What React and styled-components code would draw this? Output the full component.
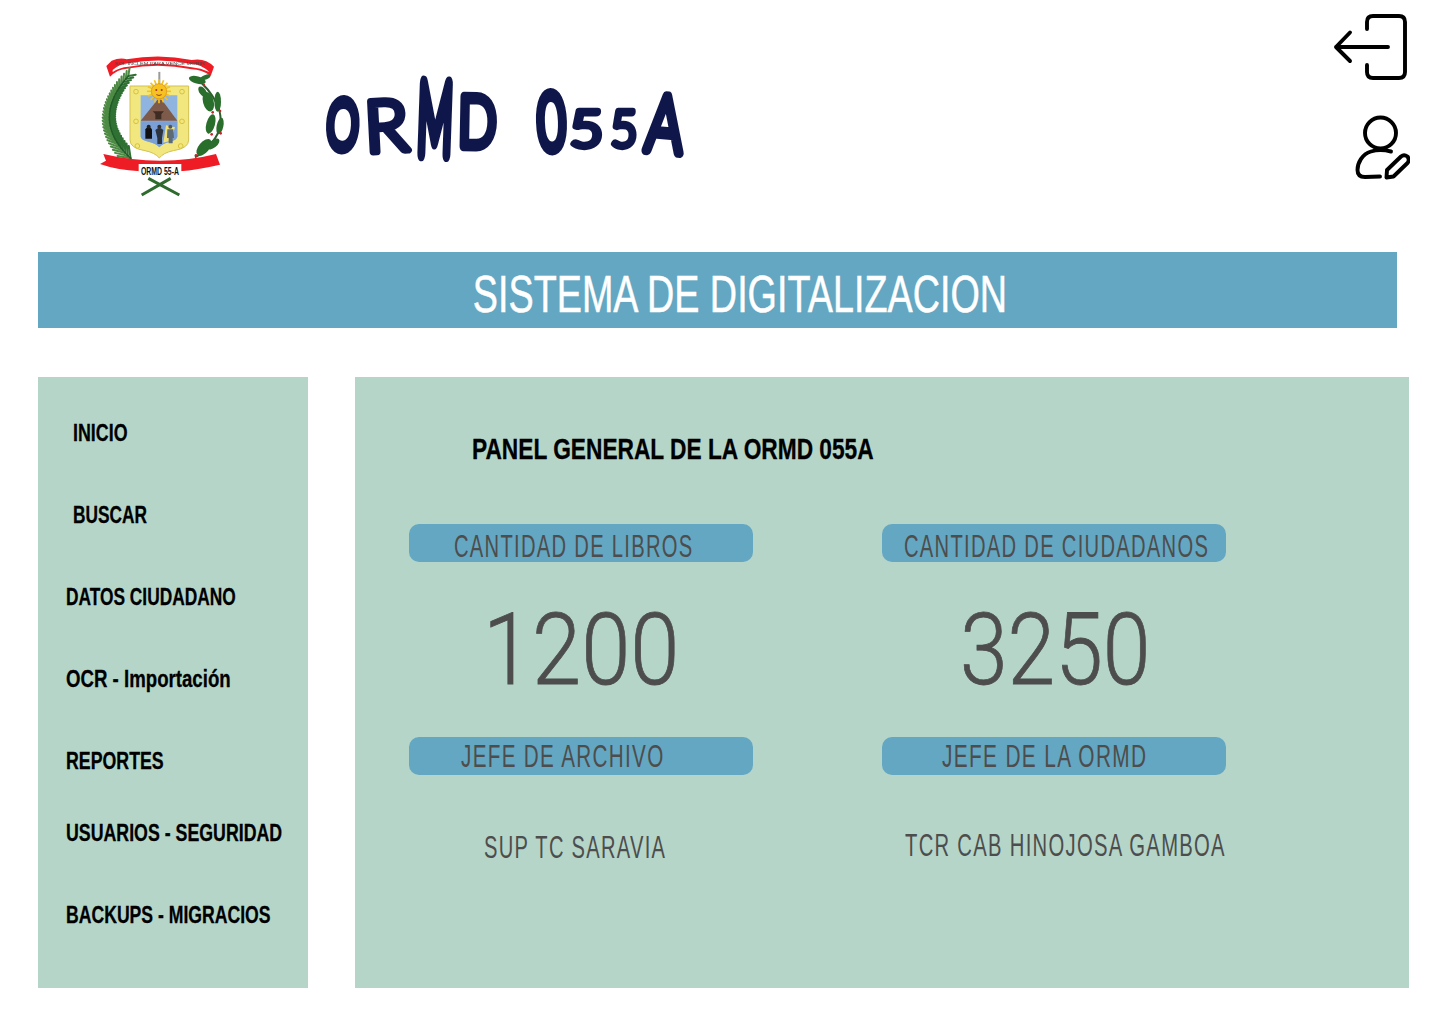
import React from "react";
import styled, { createGlobalStyle } from "styled-components";

const Global = createGlobalStyle`
  html, body { margin: 0; padding: 0; background: #fff; }
  #root { width: 1440px; height: 1024px; overflow: hidden; }
`;
const sans = `"Liberation Sans", Arial, sans-serif`;

const Page = styled.div`
  width: 1440px;
  height: 1024px;
  box-sizing: border-box;
  padding-left: 38px;
  display: flex;
  flex-direction: column;
`;
const Header = styled.header`
  height: 252px;
  display: flex;
  width: 1372px;
`;
const LogoBox = styled.div`
  margin: 40px 0 0 42px;
  width: 160px;
  height: 170px;
`;
const BrandSlot = styled.h1`
  margin: 70px 0 0 80px;
  flex: 1;
  height: 96px;
`;
const BrandMark = styled.svg`
  display: block;
  overflow: visible;
  font-family: "Lato", sans-serif;
  font-weight: 300;
  font-size: 80px;
`;
const Glyph = styled.text`
  fill: #0f174a;
  stroke: #0f174a;
  stroke-width: ${p => p.$stroke}px;
  stroke-linejoin: round;
  stroke-linecap: round;
  text-anchor: middle;
`;
const HeaderIcons = styled.div`
  display: flex;
  flex-direction: column;
  gap: 15px;
  width: 80px;
  margin-top: 10px;
`;
const Banner = styled.div`
  width: 1359px;
  height: 76px;
  background: #64a7c2;
  color: #fff;
  font: 400 52px/84px ${sans};
  -webkit-text-stroke: 0.5px #fff;
  text-align: center;
  padding-left: 45px;
  box-sizing: border-box;
`;
const Main = styled.main`
  margin-top: 49px;
  display: flex;
  gap: 47px;
  height: 611px;
`;
const Sidebar = styled.nav`
  width: 270px;
  background: #b5d5c9;
  padding-top: 15px;
  box-sizing: border-box;
`;
const NavItem = styled.div`
  height: ${p => p.$h || 82}px;
  padding-left: ${p => p.$indent}px;
  font: 700 24.5px/82px ${sans};
  -webkit-text-stroke: 0.3px #000;
  color: #000;
  white-space: nowrap;
`;
const Panel = styled.section`
  width: 1054px;
  background: #b5d5c9;
  box-sizing: border-box;
  padding: 52px 0 0 54px;
`;
const PanelTitle = styled.h2`
  margin: 0 0 55px 63px;
  font: 700 29px/40px ${sans};
  -webkit-text-stroke: 0.3px #000;
  color: #000;
`;
const Grid = styled.div`
  display: grid;
  grid-template-columns: 344px 344px;
  column-gap: 129px;
`;
const Pill = styled.div`
  height: 38px;
  border-radius: 10px;
  background: #64a7c2;
  color: #4d4d4d;
  font: 400 31px/${p => p.$lh}px ${sans};
  letter-spacing: 2px;
  padding-left: ${p => p.$indent}px;
  box-sizing: border-box;
  white-space: nowrap;
`;
const Value = styled.div`
  height: 175px;
  padding-left: ${p => p.$indent}px;
  font: 300 100px/176px "Roboto", sans-serif;
  -webkit-text-stroke: 0.8px #4d4d4d;
  color: #4d4d4d;
`;
const Person = styled.div`
  margin-top: ${p => p.$top}px;
  padding-left: ${p => p.$indent}px;
  font: 400 31px/40px ${sans};
  letter-spacing: 2px;
  color: #4d4d4d;
  white-space: nowrap;
`;
/* The reference face is a condensed sans: none is installed, so real text is narrowed. */
const Narrow = styled.span`
  display: inline-block;
  transform: scaleX(${p => p.$sx});
  transform-origin: ${p => (p.$center ? "center" : "left")} center;
  white-space: nowrap;
`;

const ExitIcon = () => (
  <svg width="80" height="75" viewBox="1330 10 80 75" fill="none" stroke="#000" strokeWidth="3.9" strokeLinecap="round" strokeLinejoin="round">
    <path d="M1367 29 V22 Q1367 16 1373 16 H1399 Q1405 16 1405 22 V72 Q1405 78 1399 78 H1373 Q1367 78 1367 72 V65" />
    <path d="M1388 47 H1336 M1350 32.5 L1336 47 L1350 61" />
  </svg>
);
const UserPenIcon = () => (
  <svg width="80" height="100" viewBox="1330 100 80 100" fill="none" stroke="#000" strokeWidth="3.9" strokeLinecap="round" strokeLinejoin="round">
    <circle cx="1380.5" cy="133" r="15.5" />
    <path d="M1391 151.5 C1385 150 1376 150 1371 151.5 C1362 154 1357.5 163 1357.5 170 C1357.5 175 1360 177 1365 177 L1380 176.5" />
    <path d="M1387 170 L1401 156.5 Q1404 154 1407.5 156.5 Q1410 160 1407.5 163 L1393.5 176.5 L1386.5 177.5 Z" />
  </svg>
);

const bez = (t, a, b, c) => [
  (1 - t) ** 2 * a[0] + 2 * t * (1 - t) * b[0] + t * t * c[0],
  (1 - t) ** 2 * a[1] + 2 * t * (1 - t) * b[1] + t * t * c[1],
];
const Frond = () => {
  const a = [152, 355], b = [28, 240], c = [145, 108];
  const out = [], inner = [];
  for (let i = 0; i < 30; i++) {
    const t = i / 29;
    const [x, y] = bez(t, a, b, c);
    const [nx, ny] = bez(t + 0.05, a, b, c);
    const len = Math.hypot(nx - x, ny - y) || 1;
    const ux = (nx - x) / len, uy = (ny - y) / len;
    const px = uy, py = -ux; // towards the outside of the curve
    const L = 30 - 12 * t;
    out.push(`M${x} ${y} L${x + ux * L + px * -L * 0.75} ${y + uy * L + py * -L * 0.75}`);
    inner.push(`M${x} ${y} L${x + ux * L * 1.1 - px * -L * 0.75} ${y + uy * L * 1.1 - py * -L * 0.75}`);
  }
  return (
    <g fill="none" strokeLinecap="round">
      <path d={inner.join(" ")} stroke="#4d8a43" strokeWidth="6" />
      <path d={out.join(" ")} stroke="#2f7033" strokeWidth="6" />
      <path d={`M${a} Q${b} ${c}`} stroke="#1f5a27" strokeWidth="4" />
    </g>
  );
};

const laurel = [
  [352, 120, 26, 11, 15], [376, 112, 16, 7, -20], [385, 185, 16, 30, -15], [413, 185, 10, 30, 0],
  [368, 155, 10, 18, -35], [392, 252, 13, 30, 15], [420, 258, 10, 25, 12], [372, 322, 16, 30, 40],
  [400, 312, 11, 22, 50],
];

const Crest = () => (
  <svg width="160" height="170" viewBox="0 0 480 510" style={{ filter: "blur(0.35px)" }}>
    <path d="M79 78 L95 62 Q120 52 140 58 Q240 40 335 60 Q375 52 402 80 L392 108 Q365 88 335 88 Q240 68 140 86 Q112 88 90 110 Z" fill="#ee1c25" />
    <path d="M98 90 Q118 72 145 70 Q240 52 335 72 Q362 72 388 96 Q362 84 335 82 Q240 62 145 80 Q118 82 98 96 Z" fill="#fff" />
    <text x="240" y="75" textAnchor="middle" fontFamily="Liberation Sans" fontSize="12" fill="#444" textLength="270" lengthAdjust="spacingAndGlyphs">SOL INCLEM PARA VENCE MORIR</text>
    <Frond />
    <path d="M345 112 C375 135 395 160 410 190 C425 220 428 260 405 295 C385 325 368 340 345 352" fill="none" stroke="#2c5f2c" strokeWidth="6" />
    <g fill="#2a6e2c">
      {laurel.map(([cx, cy, rx, ry, r], i) => (
        <ellipse key={i} cx={cx} cy={cy} rx={rx} ry={ry} transform={`rotate(${r} ${cx} ${cy})`} />
      ))}
    </g>
    <g fill="#c6242a">
      <circle cx="372" cy="135" r="3.5" /><circle cx="398" cy="217" r="4" /><circle cx="420" cy="213" r="4" />
      <circle cx="395" cy="283" r="4" /><circle cx="422" cy="280" r="4" /><circle cx="348" cy="346" r="4" />
    </g>
    <path d="M150 138 H326 V300 Q326 325 280 332 Q250 338 238 354 Q225 338 195 332 Q150 325 150 300 Z" fill="#f2e77e" stroke="#d2c24e" strokeWidth="3" />
    <path d="M182 166 H292 V290 Q290 300 270 305 Q248 310 238 322 Q228 310 205 305 Q184 300 182 290 Z" fill="#8fb4e0" />
    <path d="M182 242 L232 180 H246 L292 242 Z" fill="#7d5a4a" />
    <path d="M182 244 H292 V290 Q290 300 270 305 Q248 310 238 322 Q228 310 205 305 Q184 300 182 290 Z" fill="#7ba0d6" />
    <path d="M258 256 L285 262 L272 302 L250 308 Z" fill="#efe07a" />
    <path d="M218 214 H252 L244 222 V238 H226 V222 Z" fill="#3e2c22" />
    <rect x="235" y="95" width="6" height="85" fill="#9a9a9a" />
    <g stroke="#f6c21c" strokeWidth="5">
      {Array.from({ length: 16 }, (_, i) => {
        const a = (i * Math.PI) / 8;
        return <line key={i} x1={237 + 22 * Math.cos(a)} y1={154 + 22 * Math.sin(a)} x2={237 + 36 * Math.cos(a)} y2={154 + 36 * Math.sin(a)} />;
      })}
    </g>
    <circle cx="237" cy="154" r="23" fill="#f5c21f" stroke="#dd8a15" strokeWidth="2" />
    <circle cx="229" cy="150" r="3" fill="#a33" /><circle cx="245" cy="150" r="3" fill="#a33" />
    <path d="M229 164 Q237 169 245 164" stroke="#a33" strokeWidth="3" fill="none" />
    <path d="M196 268 q10 -14 20 0 v28 h-20 Z" fill="#111" />
    <circle cx="206" cy="260" r="6" fill="#222" />
    <path d="M226 270 q12 -12 24 0 l-4 24 v18 h-14 v-18 Z" fill="#2c3440" />
    <circle cx="238" cy="260" r="6" fill="#333" />
    <path d="M262 268 h18 l2 26 h-4 v16 h-12 v-16 h-5 Z" fill="#5d6b75" />
    <circle cx="271" cy="260" r="6" fill="#555" />
    <g fill="none" stroke="#d8c23c" strokeWidth="3">
      <circle cx="168" cy="155" r="7" /><circle cx="306" cy="155" r="7" /><circle cx="168" cy="244" r="7" />
      <circle cx="306" cy="244" r="7" /><circle cx="172" cy="318" r="7" /><circle cx="302" cy="318" r="7" />
    </g>
    <path d="M70 342 Q155 362 240 362 Q330 362 408 342 L420 374 Q350 390 300 394 H180 Q110 390 60 372 L78 362 Z" fill="#ee1c25" />
    <rect x="176" y="372" width="128" height="38" fill="#fff" />
    <text x="240" y="404" textAnchor="middle" fontFamily="Liberation Sans, sans-serif" fontWeight="700" fontSize="30" fill="#111" textLength="114" lengthAdjust="spacingAndGlyphs">ORMD 55-A</text>
    <path d="M185 465 L272 415 M298 465 L205 415" stroke="#2f6a2e" strokeWidth="9" />
  </svg>
);

const nav = [
  ["INICIO", 35, 0.728], ["BUSCAR", 35, 0.705], ["DATOS CIUDADANO", 28, 0.707], ["OCR - Importación", 28, 0.761],
  ["REPORTES", 28, 0.725, 72], ["USUARIOS - SEGURIDAD", 28, 0.725], ["BACKUPS - MIGRACIOS", 28, 0.719],
];
// character, x, baseline, horizontal and vertical scale, rotation and stroke of each hand-lettered glyph
const glyphs = [
  ["O", 341.5, 148.5, 0.5, 0.84, 3, 13],
  ["R", 387.5, 151, 0.9, 0.89, -3, 8],
  ["M", 434, 153.5, 0.48, 1.23, 2, 13],
  ["D", 477, 146.5, 0.63, 0.88, 1, 11],
  ["0", 552.5, 149.5, 0.6, 0.98, -2, 11],
  ["5", 586.5, 146.5, 0.72, 0.63, 0, 10],
  ["5", 624, 146.5, 0.58, 0.63, 0, 10],
  ["A", 662.5, 151.5, 0.7, 0.98, 5, 10],
];

export default function App() {
  return (
    <Page>
      <Global />
      <Header>
        <LogoBox><Crest /></LogoBox>
        <BrandSlot>
          <BrandMark width="370" height="96" viewBox="320 70 370 96" role="img" aria-label="ORMD 055A">
            {glyphs.map(([c, x, y, sx, sy, r, s], i) => (
              <Glyph key={i} $stroke={s} transform={`translate(${x} ${y}) rotate(${r}) scale(${sx} ${sy})`}>{c}</Glyph>
            ))}
          </BrandMark>
        </BrandSlot>
        <HeaderIcons><ExitIcon /><UserPenIcon /></HeaderIcons>
      </Header>
      <Banner><Narrow $sx={0.726} $center>SISTEMA DE DIGITALIZACION</Narrow></Banner>
      <Main>
        <Sidebar>
          {nav.map(([t, i, sx, h]) => <NavItem key={t} $indent={i} $h={h}><Narrow $sx={sx}>{t}</Narrow></NavItem>)}
        </Sidebar>
        <Panel>
          <PanelTitle><Narrow $sx={0.783}>PANEL GENERAL DE LA ORMD 055A</Narrow></PanelTitle>
          <Grid>
            <Pill $indent={45} $lh={46}><Narrow $sx={0.65}>CANTIDAD DE LIBROS</Narrow></Pill>
            <Pill $indent={22} $lh={46}><Narrow $sx={0.65}>CANTIDAD DE CIUDADANOS</Narrow></Pill>
            <Value $indent={74}><Narrow $sx={0.885}>1200</Narrow></Value>
            <Value $indent={78}><Narrow $sx={0.858}>3250</Narrow></Value>
            <Pill $indent={52} $lh={40}><Narrow $sx={0.666}>JEFE DE ARCHIVO</Narrow></Pill>
            <Pill $indent={60} $lh={40}><Narrow $sx={0.672}>JEFE DE LA ORMD</Narrow></Pill>
            <Person $top={53} $indent={75}><Narrow $sx={0.648}>SUP TC SARAVIA</Narrow></Person>
            <Person $top={51} $indent={23}><Narrow $sx={0.652}>TCR CAB HINOJOSA GAMBOA</Narrow></Person>
          </Grid>
        </Panel>
      </Main>
    </Page>
  );
}
